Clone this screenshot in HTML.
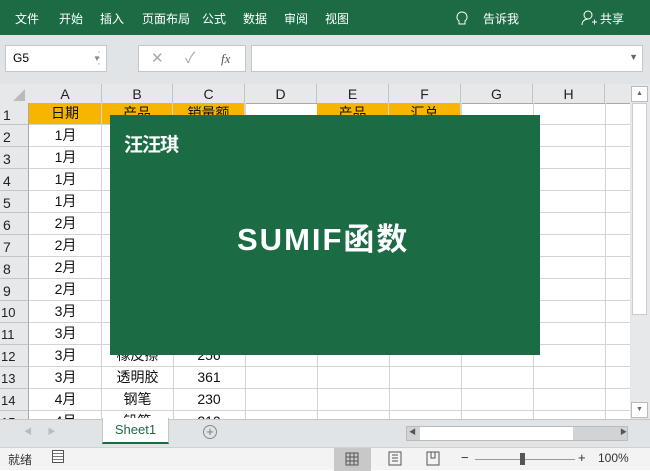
<!DOCTYPE html><html><head><meta charset="utf-8"><style>
*{margin:0;padding:0;box-sizing:border-box}
body{width:650px;height:470px;overflow:hidden;position:relative;background:#fff;font-family:"Liberation Sans","Noto Sans CJK SC",sans-serif;font-size:12px}
.abs{position:absolute}
.rib{left:0;top:0;width:650px;height:35px;background:#1d6b45;color:#fff}
.rib span{position:absolute;top:10px;font-size:12px}
.fb{left:0;top:35px;width:650px;height:49px;background:#e0e4e6}
.box{background:#fff;border:1px solid #c6c6c6}
.ch{top:84px;height:20px;background:#e6e8ea;border-bottom:1px solid #a8a8a8;font-size:14px;color:#222;line-height:20px}
.ch span{text-align:center;height:19px;top:0}
.c{position:absolute;border-right:1px solid #d4d4d4;border-bottom:1px solid #d4d4d4;text-align:center;font-size:14px;color:#111;line-height:21px;height:22px}
.rh{position:absolute;left:0;width:29px;height:22px;background:#e6e8ea;border-bottom:1px solid #c4c4c4;border-right:1px solid #a8a8a8;font-size:14px;line-height:24px;padding-left:3px;color:#222}
</style></head><body>
<div class="abs rib">
<span style="left:15px">文件</span><span style="left:59px">开始</span><span style="left:100px">插入</span><span style="left:142px">页面布局</span><span style="left:202px">公式</span><span style="left:243px">数据</span><span style="left:284px">审阅</span><span style="left:325px">视图</span>
<svg class="abs" style="left:455px;top:11px" width="14" height="16"><path d="M7 1a5 5 0 0 0-3 9v3h6v-3a5 5 0 0 0-3-9z" fill="none" stroke="#fff"/></svg>
<span style="left:483px">告诉我</span>
<svg class="abs" style="left:581px;top:10px" width="16" height="17"><circle cx="7" cy="5" r="4" fill="none" stroke="#fff"/><path d="M1 15c0-4 3-6 6-6M11 12h5M13.5 9.5v5" fill="none" stroke="#fff"/></svg>
<span style="left:600px">共享</span>
</div>
<div class="abs fb">
<div class="abs box" style="left:5px;top:10px;width:102px;height:27px;line-height:25px;padding-left:7px;font-size:12px">G5</div>
<div class="abs" style="left:93px;top:19px;color:#888;font-size:8px">▼</div>
<div class="abs" style="left:97px;top:13px;color:#aaa;font-size:12px;line-height:6px">·<br>·<br>·</div>
<div class="abs box" style="left:138px;top:10px;width:108px;height:27px;color:#aaa;font-size:15px;line-height:25px"><span style="position:absolute;left:12px">✕</span><span style="position:absolute;left:46px">✓</span><span style="position:absolute;left:82px;color:#555;font-style:italic;font-family:'Liberation Serif';font-size:13px">fx</span></div>
<div class="abs box" style="left:251px;top:10px;width:392px;height:27px"><span style="position:absolute;right:4px;top:6px;color:#666;font-size:9px">▼</span></div>
</div>
<div class="abs ch" style="left:0;width:29px"></div>
<svg class="abs" style="left:12px;top:88px" width="14" height="14"><path d="M13 1V13H1z" fill="#bbb"/></svg>
<div class="abs ch" style="left:29px;width:601px">
<span class="abs" style="left:0;width:73px;border-right:1px solid #c4c4c4">A</span><span class="abs" style="left:73px;width:71px;border-right:1px solid #c4c4c4">B</span><span class="abs" style="left:144px;width:72px;border-right:1px solid #c4c4c4">C</span><span class="abs" style="left:216px;width:72px;border-right:1px solid #c4c4c4">D</span><span class="abs" style="left:288px;width:72px;border-right:1px solid #c4c4c4">E</span><span class="abs" style="left:360px;width:72px;border-right:1px solid #c4c4c4">F</span><span class="abs" style="left:432px;width:72px;border-right:1px solid #c4c4c4">G</span><span class="abs" style="left:504px;width:72px;border-right:1px solid #c4c4c4">H</span>
</div>
<div class="abs" style="left:0;top:103px;width:630px;height:316px;overflow:hidden">
<div style="position:relative">
<div class="rh" style="top:0">1</div><div class="rh" style="top:22px">2</div><div class="rh" style="top:44px">3</div><div class="rh" style="top:66px">4</div><div class="rh" style="top:88px">5</div><div class="rh" style="top:110px">6</div><div class="rh" style="top:132px">7</div><div class="rh" style="top:154px">8</div><div class="rh" style="top:176px">9</div><div class="rh" style="top:198px;font-size:13px;padding-left:1px">10</div><div class="rh" style="top:220px;font-size:13px;padding-left:1px">11</div><div class="rh" style="top:242px;font-size:13px;padding-left:1px">12</div><div class="rh" style="top:264px;font-size:13px;padding-left:1px">13</div><div class="rh" style="top:286px;font-size:13px;padding-left:1px">14</div><div class="rh" style="top:308px;font-size:13px;padding-left:1px">15</div>
<div class="abs" style="left:29px;top:0;width:601px;height:330px;background-image:linear-gradient(#d4d4d4 1px,transparent 1px);background-size:100% 22px;background-position:0 21px"></div>
<div class="abs" style="left:29px;top:0;width:601px;height:330px;background-image:linear-gradient(90deg,transparent 72px,#d4d4d4 72px,#d4d4d4 73px,transparent 73px),linear-gradient(90deg,transparent 144px,#d4d4d4 144px,#d4d4d4 145px,transparent 145px),linear-gradient(90deg,transparent 216px,#d4d4d4 216px,#d4d4d4 217px,transparent 217px),linear-gradient(90deg,transparent 288px,#d4d4d4 288px,#d4d4d4 289px,transparent 289px),linear-gradient(90deg,transparent 360px,#d4d4d4 360px,#d4d4d4 361px,transparent 361px),linear-gradient(90deg,transparent 432px,#d4d4d4 432px,#d4d4d4 433px,transparent 433px),linear-gradient(90deg,transparent 504px,#d4d4d4 504px,#d4d4d4 505px,transparent 505px),linear-gradient(90deg,transparent 576px,#d4d4d4 576px,#d4d4d4 577px,transparent 577px)"></div>
<div class="c" style="left:29px;top:0;width:73px;background:#f8b500">日期</div><div class="c" style="left:102px;top:0;width:71px;background:#f8b500">产品</div><div class="c" style="left:173px;top:0;width:72px;background:#f8b500">销量额</div>
<div class="c" style="left:317px;top:0;width:72px;background:#f8b500">产品</div><div class="c" style="left:389px;top:0;width:72px;background:#f8b500">汇总</div>
<div class="c" style="left:29px;top:22px;width:73px;border:0">1月</div><div class="c" style="left:29px;top:44px;width:73px;border:0">1月</div><div class="c" style="left:29px;top:66px;width:73px;border:0">1月</div><div class="c" style="left:29px;top:88px;width:73px;border:0">1月</div>
<div class="c" style="left:29px;top:110px;width:73px;border:0">2月</div><div class="c" style="left:29px;top:132px;width:73px;border:0">2月</div><div class="c" style="left:29px;top:154px;width:73px;border:0">2月</div><div class="c" style="left:29px;top:176px;width:73px;border:0">2月</div>
<div class="c" style="left:29px;top:198px;width:73px;border:0">3月</div><div class="c" style="left:29px;top:220px;width:73px;border:0">3月</div><div class="c" style="left:29px;top:242px;width:73px;border:0">3月</div><div class="c" style="left:29px;top:264px;width:73px;border:0">3月</div><div class="c" style="left:29px;top:286px;width:73px;border:0">4月</div><div class="c" style="left:29px;top:308px;width:73px;border:0">4月</div>
<div class="c" style="left:102px;top:242px;width:71px;border:0">橡皮擦</div><div class="c" style="left:102px;top:264px;width:71px;border:0">透明胶</div><div class="c" style="left:102px;top:286px;width:71px;border:0">钢笔</div><div class="c" style="left:102px;top:308px;width:71px;border:0">铅笔</div>
<div class="c" style="left:173px;top:242px;width:72px;border:0">256</div><div class="c" style="left:173px;top:264px;width:72px;border:0">361</div><div class="c" style="left:173px;top:286px;width:72px;border:0">230</div><div class="c" style="left:173px;top:308px;width:72px;border:0">210</div>
</div></div>
<div class="abs" style="left:630px;top:84px;width:20px;height:335px;background:#e6e8ea"></div>
<div class="abs" style="left:631px;top:86px;width:17px;height:16px;background:#fff;border:1px solid #bbb;font-size:7px;text-align:center;line-height:14px;color:#666">▲</div>
<div class="abs" style="left:632px;top:103px;width:15px;height:212px;background:#fff;border:1px solid #ccc"></div>
<div class="abs" style="left:631px;top:402px;width:17px;height:16px;background:#fff;border:1px solid #bbb;font-size:7px;text-align:center;line-height:14px;color:#666">▼</div>
<div class="abs" style="left:110px;top:115px;width:430px;height:240px;background:#1b6b45;color:#fff;font-weight:bold">
<div class="abs" style="left:14px;top:15px;font-size:19px;letter-spacing:-1px">汪汪琪</div>
<div class="abs" style="left:127px;top:99px;font-size:31px;letter-spacing:2px;white-space:nowrap">SUMIF函数</div>
</div>
<div class="abs" style="left:0;top:419px;width:650px;height:28px;background:#e0e4e6;border-top:1px solid #c6c6c6"></div>
<div class="abs" style="left:24px;top:426px;color:#bbb;font-size:8px">◀&nbsp;&nbsp;&nbsp;&nbsp;&nbsp;&nbsp;&nbsp;▶</div>
<div class="abs" style="left:102px;top:418px;width:67px;height:26px;background:#fff;border-left:1px solid #c6c6c6;border-right:1px solid #c6c6c6;border-bottom:2px solid #1d6b45;color:#1d6b45;font-size:13px;text-align:center;line-height:24px">Sheet1</div>
<div class="abs" style="left:203px;top:425px;width:14px;height:14px;border:1px solid #888;border-radius:50%;color:#777;font-size:13px;line-height:11px;text-align:center">+</div>
<div class="abs" style="left:406px;top:426px;width:222px;height:15px;background:#d0d4d6;border:1px solid #bbb"></div>
<div class="abs" style="left:420px;top:427px;width:153px;height:13px;background:#fff"></div>
<div class="abs" style="left:409px;top:427px;color:#555;font-size:7px">◀</div><div class="abs" style="left:620px;top:427px;color:#555;font-size:7px">▶</div>
<div class="abs" style="left:0;top:447px;width:650px;height:23px;background:#f3f3f3;border-top:1px solid #d0d0d0;font-size:12px;color:#333">
<span class="abs" style="left:8px;top:3px">就绪</span>
<span class="abs" style="left:52px;top:2px;width:12px;height:13px;border:1px solid #555;background:repeating-linear-gradient(#fff 0 2px,#777 2px 3px)"></span>
<span class="abs" style="left:334px;top:0;width:37px;height:23px;background:#c8c8c8"></span>
<svg class="abs" style="left:345px;top:4px" width="14" height="14"><path d="M1 1h12v12H1zM5 1v12M9 1v12M1 5h12M1 9h12" fill="none" stroke="#555"/></svg>
<svg class="abs" style="left:388px;top:3px" width="14" height="15"><path d="M1 1h12v13H1zM4 4h6M4 7h6M4 10h6" fill="none" stroke="#555"/></svg>
<svg class="abs" style="left:426px;top:3px" width="14" height="15"><path d="M1 1h12v13H1zM5 1v6h4V1" fill="none" stroke="#555"/></svg>
<span class="abs" style="left:461px;top:2px;font-size:13px">−</span>
<span class="abs" style="left:475px;top:11px;width:100px;height:1px;background:#999"></span>
<span class="abs" style="left:520px;top:5px;width:5px;height:12px;background:#555"></span>
<span class="abs" style="left:578px;top:2px;font-size:13px">+</span>
<span class="abs" style="left:598px;top:3px">100%</span>
</div>
</body></html>
